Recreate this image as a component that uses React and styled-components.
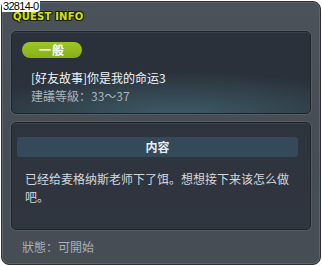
import React from 'react';
import styled, { createGlobalStyle } from 'styled-components';

const GlobalStyle = createGlobalStyle`
  html, body {
    margin: 0;
    padding: 0;
    background: #ffffff;
  }
  body {
    font-family: "Noto Sans CJK SC", "Liberation Sans", sans-serif;
  }
`;

const Window = styled.div`
  position: relative;
  box-sizing: border-box;
  width: 320px;
  height: 264px;
  margin: 1px 0 0 1px;
  padding: 0 9px 0 9px;
  background: linear-gradient(180deg, #4b525a 0%, #454c54 60%, #464d55 100%);
  border: 1px solid #2b3036;
  border-radius: 6px 8px 8px 8px;
  box-shadow: inset 0 0 0 1px #5b636b;
  display: flex;
  flex-direction: column;
`;

const IdLabel = styled.div`
  position: absolute;
  left: 0px;
  top: -1px;
  font-family: "Liberation Sans", sans-serif;
  font-size: 11px;
  line-height: 11px;
  letter-spacing: -0.7px;
  color: #000;
  background: #fff;
  padding: 0 2px 0 1px;
  border-radius: 0 0 3px 0;
`;

const Title = styled.div`
  height: 29px;
  box-sizing: border-box;
  padding: 9px 0 0 2px;
  font-family: "DejaVu Sans", "Liberation Sans", sans-serif;
  font-weight: bold;
  font-size: 10px;
  line-height: 12px;
  letter-spacing: 0.2px;
  color: #d2e40c;
  text-shadow: 1px 0 0 #1b1f10, -1px 0 0 #1b1f10, 0 1px 0 #1b1f10, 0 -1px 0 #1b1f10,
    1px 1px 0 #1b1f10, -1px -1px 0 #1b1f10, 1px -1px 0 #1b1f10, -1px 1px 0 #1b1f10;
`;

const Panel = styled.div`
  box-sizing: border-box;
  height: ${p => p.$h}px;
  border: 1px solid #1f242b;
  border-radius: 5px;
  box-shadow: 0 0 0 1px #555c64, inset 0 1px 0 #3a414b;
  background: ${p => p.$bg};
  padding: ${p => p.$pad};
`;

const Badge = styled.div`
  width: 60px;
  height: 16px;
  margin-top: 1px;
  border-radius: 8px;
  background: linear-gradient(180deg, #9cc626 0%, #86b016 100%);
  color: #ffffff;
  font-weight: bold;
  font-size: 12px;
  line-height: 16px;
  text-align: center;
  letter-spacing: 1px;
`;

const QuestName = styled.div`
  margin-top: 12px;
  padding-left: 9px;
  font-size: 12px;
  line-height: 16px;
  color: #f2f4f6;
`;

const Level = styled.div`
  margin-top: 2px;
  padding-left: 9px;
  font-size: 12px;
  line-height: 16px;
  color: #a9b4bc;
`;

const SectionHeader = styled.div`
  height: 20px;
  margin-right: 7px;
  border-radius: 3px;
  background: #34495a;
  color: #e6ecef;
  font-weight: bold;
  font-size: 12px;
  line-height: 20px;
  text-align: center;
`;

const Body = styled.div`
  margin-top: 13px;
  padding: 0 8px 0 8px;
  font-size: 12px;
  line-height: 18px;
  color: #d2d8dd;
`;

const Status = styled.div`
  padding: 9px 0 0 11px;
  font-size: 12px;
  line-height: 16px;
  color: #a8b0b8;
`;

const Gap = styled.div`
  height: ${p => p.$h}px;
  flex: none;
`;

export default function App() {
  return (
    <>
      <GlobalStyle />
      <Window>
        <IdLabel>32814-0</IdLabel>
        <Title>QUEST INFO</Title>
        <Panel
          $h={83}
          $pad="9px 10px 0 10px"
          $bg="radial-gradient(ellipse 90% 70% at 55% 105%, #3e5c69 0%, #33454f 45%, #2a313b 80%)"
        >
          <Badge>一般</Badge>
          <QuestName>[好友故事]你是我的命运3</QuestName>
          <Level>建議等級：33～37</Level>
        </Panel>
        <Gap $h={8} />
        <Panel $h={108} $pad="14px 5px 0 5px" $bg="linear-gradient(180deg, #2e343e 0%, #30353f 100%)">
          <SectionHeader>内容</SectionHeader>
          <Body>已经给麦格纳斯老师下了饵。想想接下来该怎么做吧。</Body>
        </Panel>
        <Status>狀態：可開始</Status>
      </Window>
    </>
  );
}
